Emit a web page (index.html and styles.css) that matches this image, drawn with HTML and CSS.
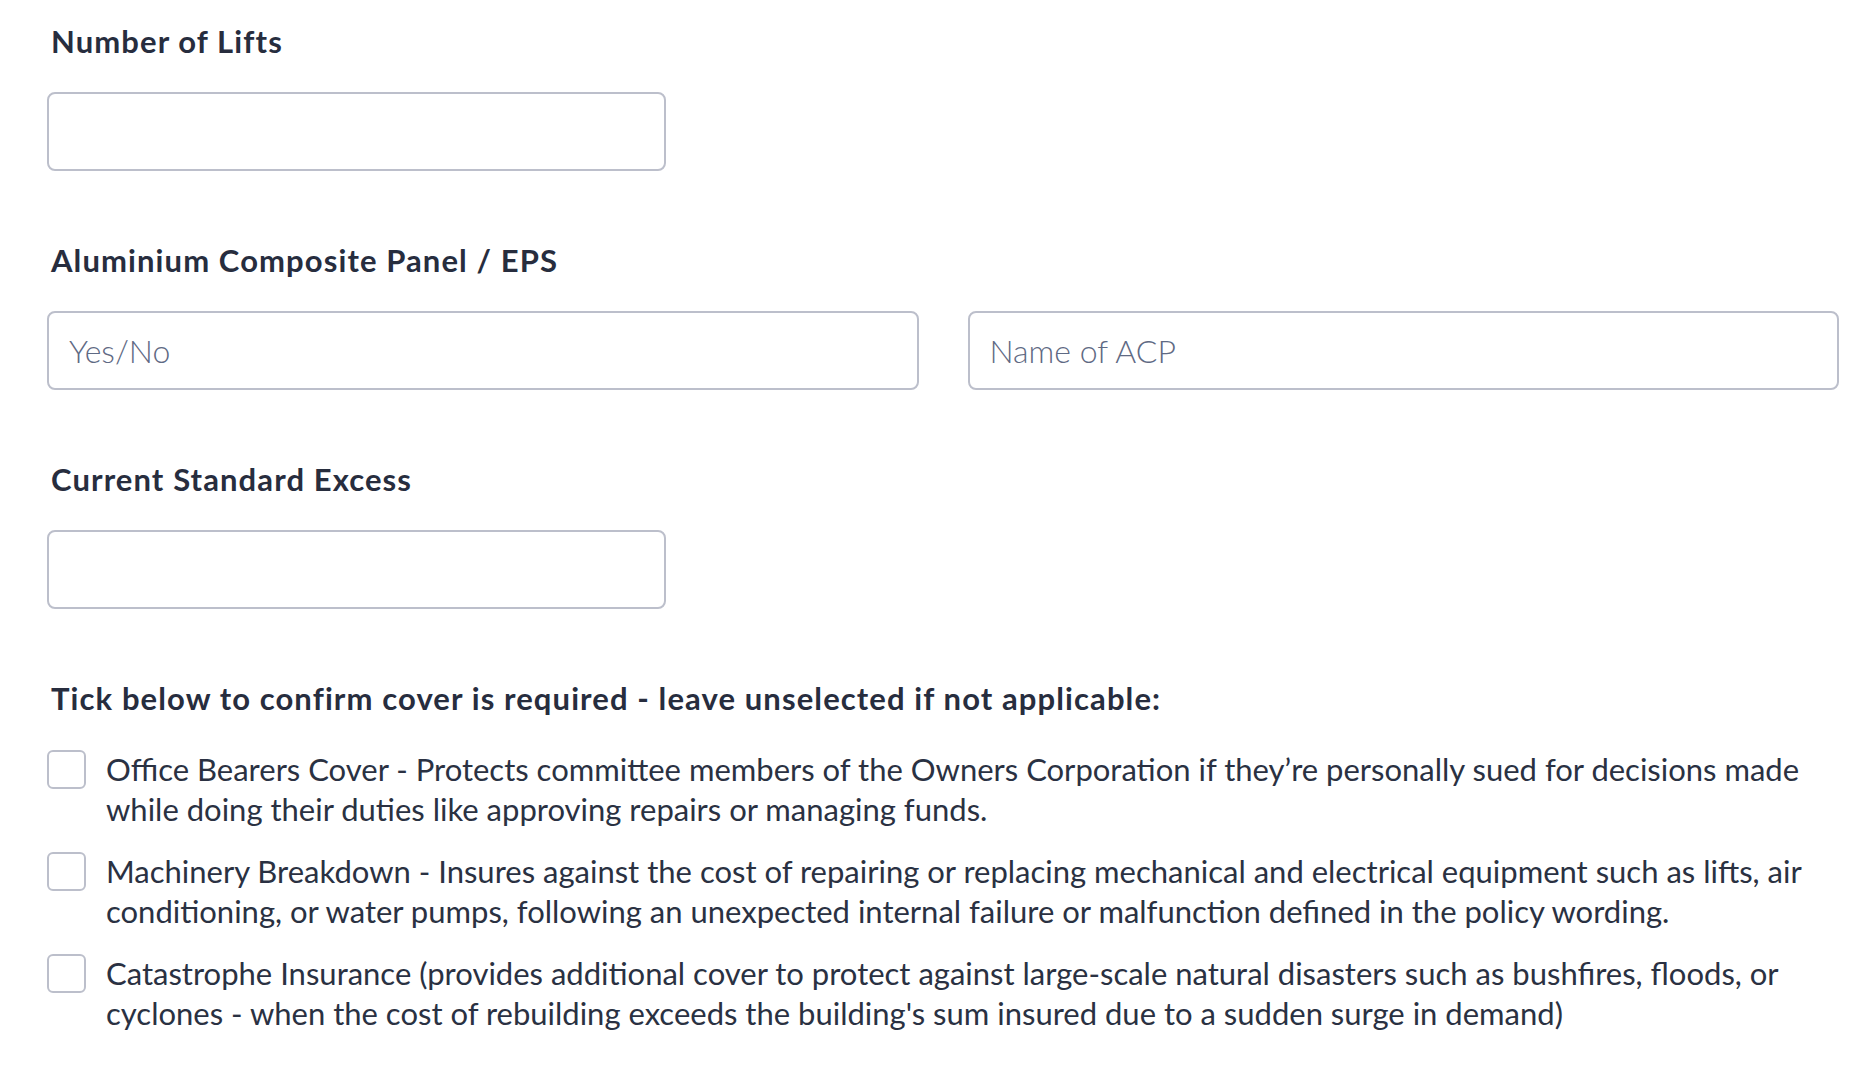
FILE: index.html
```html
<!DOCTYPE html>
<html lang="en">
<head>
<meta charset="utf-8">
<title>Building details</title>
<link rel="stylesheet" href="styles.css">
</head>
<body>
<form class="form">
  <div class="field">
    <label class="field-label" for="lifts">Number of Lifts</label>
    <input class="text-input short" id="lifts" type="text">
  </div>

  <div class="field">
    <label class="field-label" for="acp">Aluminium Composite Panel / EPS</label>
    <div class="pair">
      <input class="text-input" id="acp" type="text" placeholder="Yes/No">
      <input class="text-input" type="text" placeholder="Name of ACP">
    </div>
  </div>

  <div class="field">
    <label class="field-label" for="excess">Current Standard Excess</label>
    <input class="text-input short" id="excess" type="text">
  </div>

  <div class="field cover">
    <p class="field-label">Tick below to confirm cover is required - leave unselected if not applicable:</p>
    <ul class="options">
      <li class="option">
        <input class="box" type="checkbox" id="c1">
        <label for="c1">Office Bearers Cover - Protects committee members of the Owners Corporation if they’re personally sued for decisions made while doing their duties like approving repairs or managing funds.</label>
      </li>
      <li class="option">
        <input class="box" type="checkbox" id="c2">
        <label for="c2">Machinery Breakdown - Insures against the cost of repairing or replacing mechanical and electrical equipment such as lifts, air conditioning, or water pumps, following an unexpected internal failure or malfunction defined in the policy wording.</label>
      </li>
      <li class="option">
        <input class="box" type="checkbox" id="c3">
        <label for="c3">Catastrophe Insurance (provides additional cover to protect against large-scale natural disasters such as bushfires, floods, or cyclones - when the cost of rebuilding exceeds the building's sum insured due to a sudden surge in demand)</label>
      </li>
    </ul>
  </div>
</form>
</body>
</html>
```

FILE: styles.css
```css
html, body {
  margin: 0;
  padding: 0;
  background: #ffffff;
}

body {
  font-family: "Lato", "Open Sans", sans-serif;
  color: #2a3142;
}

.form {
  padding: 19px 31px 0 47px;
  display: flex;
  flex-direction: column;
  gap: 67px;
}

.field {
  display: flex;
  flex-direction: column;
  align-items: flex-start;
}

.field-label {
  display: block;
  margin: 0 0 29px 4px;
  font-size: 31px;
  line-height: 44px;
  font-weight: 700;
  letter-spacing: 1.1px;
  color: #272d3e;
}

.text-input {
  box-sizing: border-box;
  height: 79px;
  margin: 0;
  padding: 0 20px;
  border: 2px solid #bcbfcb;
  border-radius: 8px;
  background: #fff;
  font-family: inherit;
  font-size: 32px;
  font-weight: 300;
  color: #2a3142;
  outline: none;
}

.text-input::placeholder {
  color: #5f6a84;
  font-weight: 300;
  opacity: 1;
}

.short {
  width: 619px;
}

.pair {
  align-self: stretch;
  display: grid;
  grid-template-columns: 1fr 1fr;
  gap: 49px;
}

.pair .text-input {
  width: 100%;
}

.cover .field-label {
  margin-bottom: 29px;
}

.options {
  list-style: none;
  margin: 0;
  padding: 0;
  display: flex;
  flex-direction: column;
  gap: 22px;
}

.option {
  display: flex;
  align-items: flex-start;
  gap: 20px;
}

.box {
  appearance: none;
  -webkit-appearance: none;
  flex: none;
  box-sizing: border-box;
  width: 39px;
  height: 39px;
  margin: 1px 0 0 0;
  border: 2px solid #bcbfcb;
  border-radius: 6px;
  background: #fff;
}

.option label {
  font-size: 31px;
  line-height: 40px;
  font-weight: 400;
  color: #2a3142;
}
```
